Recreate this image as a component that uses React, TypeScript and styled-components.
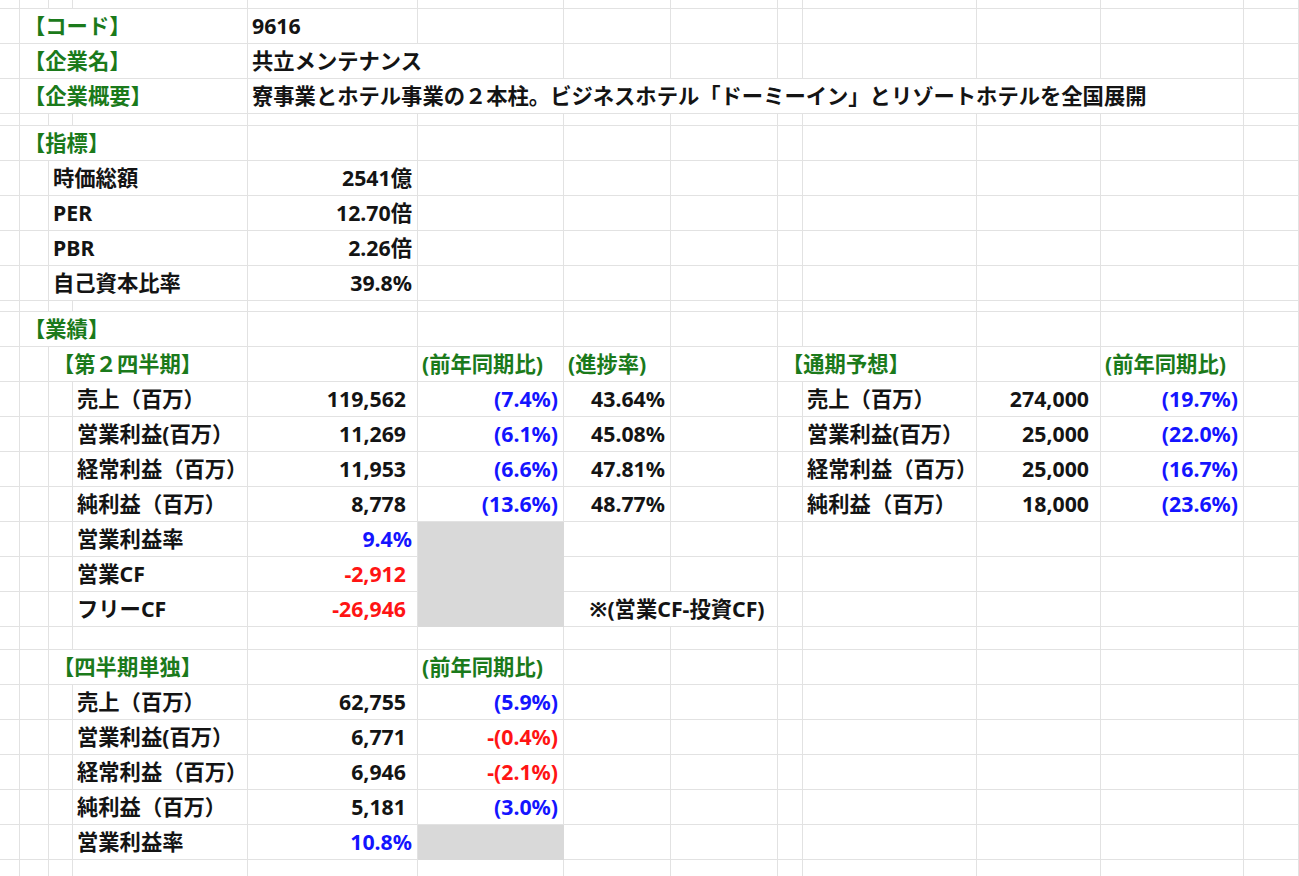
import React from 'react';
import styled, { createGlobalStyle, css } from 'styled-components';

const GlobalStyle = createGlobalStyle`
  html, body { margin: 0; padding: 0; background: #ffffff; }
  body { font-family: "Noto Sans", "Noto Sans CJK JP", sans-serif; }
`;

const COLS = '20px 29px 24px 175px 170px 146px 107px 107px 25px 174px 124px 143px 1fr';
const LETTERS = ['A', 'B', 'C', 'D', 'E', 'F', 'G', 'H', 'I', 'J', 'K', 'L', 'M'];

type Tone = 'ink' | 'green' | 'blue' | 'red';
type Align = 'left' | 'right';

interface CellSpec {
  text?: string;
  span?: number;
  tone?: Tone;
  align?: Align;
  trail?: boolean;
  shade?: boolean;
}

interface RowSpec {
  h: number;
  cells?: Record<string, CellSpec>;
}

const toneColor: Record<Tone, string> = {
  ink: '#141414',
  green: '#1b7a1b',
  blue: '#1414ff',
  red: '#ff1414',
};

const Sheet = styled.div`
  width: 1299px;
  height: 876px;
  overflow: hidden;
  display: flex;
  flex-direction: column;
  background: #ffffff;
`;

const SheetRow = styled.div<{ $h: number }>`
  display: grid;
  grid-template-columns: ${COLS};
  height: ${(p) => p.$h}px;
  flex: none;
`;

const Cell = styled.div<{
  $span: number;
  $tone: Tone;
  $align: Align;
  $trail: boolean;
  $shade: boolean;
}>`
  box-sizing: border-box;
  grid-column: span ${(p) => p.$span};
  display: flex;
  align-items: center;
  justify-content: ${(p) => (p.$align === 'right' ? 'flex-end' : 'flex-start')};
  padding: ${(p) => (p.$align === 'right' ? `0 ${p.$trail ? 11 : 5}px 0 0` : '0 0 0 4px')};
  border-right: 1px solid #e2e2e2;
  border-bottom: 1px solid #e2e2e2;
  background: transparent;
  ${(p) =>
    p.$shade &&
    css`
      background: #d9d9d9;
      border-color: #d9d9d9;
    `}
  color: ${(p) => toneColor[p.$tone]};
  font-size: 21.3px;
  font-weight: 700;
  line-height: 1;
  white-space: nowrap;
  overflow: visible;
  min-width: 0;
`;

const g = (text: string, span = 1): CellSpec => ({ text, span, tone: 'green' });
const lbl = (text: string, span = 1): CellSpec => ({ text, span });
const num = (text: string, tone: Tone = 'ink', trail = false): CellSpec => ({
  text,
  tone,
  trail,
  align: 'right',
});
const shade: CellSpec = { shade: true };

const ROWS: RowSpec[] = [
  { h: 9 },
  { h: 35, cells: { B: g('【コード】', 3), E: lbl('9616') } },
  { h: 35, cells: { B: g('【企業名】', 3), E: lbl('共立メンテナンス', 2) } },
  {
    h: 35,
    cells: {
      B: g('【企業概要】', 3),
      E: lbl('寮事業とホテル事業の２本柱。ビジネスホテル「ドーミーイン」とリゾートホテルを全国展開', 8),
    },
  },
  { h: 12 },
  { h: 35, cells: { B: g('【指標】', 3) } },
  { h: 35, cells: { C: lbl('時価総額', 2), E: num('2541億') } },
  { h: 35, cells: { C: lbl('PER', 2), E: num('12.70倍') } },
  { h: 35, cells: { C: lbl('PBR', 2), E: num('2.26倍') } },
  { h: 35, cells: { C: lbl('自己資本比率', 2), E: num('39.8%') } },
  { h: 11 },
  { h: 35, cells: { B: g('【業績】', 3) } },
  {
    h: 35,
    cells: {
      C: g('【第２四半期】', 2),
      F: g('(前年同期比)'),
      G: g('(進捗率)'),
      I: g('【通期予想】', 2),
      L: g('(前年同期比)'),
    },
  },
  {
    h: 35,
    cells: {
      D: lbl('売上（百万）'),
      E: num('119,562', 'ink', true),
      F: num('(7.4%)', 'blue'),
      G: num('43.64%'),
      J: lbl('売上（百万）'),
      K: num('274,000', 'ink', true),
      L: num('(19.7%)', 'blue'),
    },
  },
  {
    h: 35,
    cells: {
      D: lbl('営業利益(百万）'),
      E: num('11,269', 'ink', true),
      F: num('(6.1%)', 'blue'),
      G: num('45.08%'),
      J: lbl('営業利益(百万）'),
      K: num('25,000', 'ink', true),
      L: num('(22.0%)', 'blue'),
    },
  },
  {
    h: 35,
    cells: {
      D: lbl('経常利益（百万）'),
      E: num('11,953', 'ink', true),
      F: num('(6.6%)', 'blue'),
      G: num('47.81%'),
      J: lbl('経常利益（百万）'),
      K: num('25,000', 'ink', true),
      L: num('(16.7%)', 'blue'),
    },
  },
  {
    h: 35,
    cells: {
      D: lbl('純利益（百万）'),
      E: num('8,778', 'ink', true),
      F: num('(13.6%)', 'blue'),
      G: num('48.77%'),
      J: lbl('純利益（百万）'),
      K: num('18,000', 'ink', true),
      L: num('(23.6%)', 'blue'),
    },
  },
  { h: 35, cells: { D: lbl('営業利益率'), E: num('9.4%', 'blue'), F: shade } },
  { h: 35, cells: { D: lbl('営業CF'), E: num('-2,912', 'red', true), F: shade } },
  {
    h: 35,
    cells: {
      D: lbl('フリーCF'),
      E: num('-26,946', 'red', true),
      F: shade,
      G: lbl('　※(営業CF-投資CF)', 2),
    },
  },
  { h: 23 },
  { h: 35, cells: { C: g('【四半期単独】', 2), F: g('(前年同期比)') } },
  {
    h: 35,
    cells: { D: lbl('売上（百万）'), E: num('62,755', 'ink', true), F: num('(5.9%)', 'blue') },
  },
  {
    h: 35,
    cells: { D: lbl('営業利益(百万）'), E: num('6,771', 'ink', true), F: num('-(0.4%)', 'red') },
  },
  {
    h: 35,
    cells: { D: lbl('経常利益（百万）'), E: num('6,946', 'ink', true), F: num('-(2.1%)', 'red') },
  },
  {
    h: 35,
    cells: { D: lbl('純利益（百万）'), E: num('5,181', 'ink', true), F: num('(3.0%)', 'blue') },
  },
  { h: 35, cells: { D: lbl('営業利益率'), E: num('10.8%', 'blue'), F: shade } },
  { h: 35 },
];

function renderCells(cells: Record<string, CellSpec> = {}) {
  const out: React.ReactNode[] = [];
  let i = 0;
  while (i < LETTERS.length) {
    const letter = LETTERS[i];
    const spec = cells[letter] ?? {};
    const span = spec.span ?? 1;
    out.push(
      <Cell
        key={letter}
        $span={span}
        $tone={spec.tone ?? 'ink'}
        $align={spec.align ?? 'left'}
        $trail={!!spec.trail}
        $shade={!!spec.shade}
      >
        {spec.text}
      </Cell>
    );
    i += span;
  }
  return out;
}

export default function App() {
  return (
    <>
      <GlobalStyle />
      <Sheet>
        {ROWS.map((row, idx) => (
          <SheetRow key={idx} $h={row.h}>
            {renderCells(row.cells)}
          </SheetRow>
        ))}
      </Sheet>
    </>
  );
}
